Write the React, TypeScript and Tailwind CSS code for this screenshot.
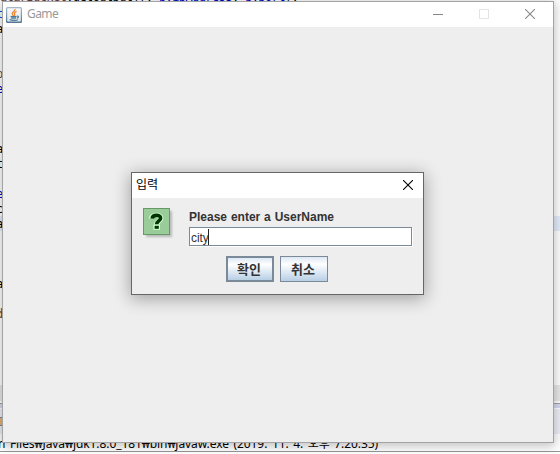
const codeRows: { text: string; color: string }[] = [
  { text: 't', color: 'text-blue-700' },
  { text: 'a', color: 'text-black' },
  { text: '', color: '' },
  { text: '', color: '' },
  { text: 'p', color: 'text-[#6a3e3e]' },
  { text: 'e', color: 'text-[#0000c0]' },
  { text: '', color: '' },
  { text: '', color: '' },
  { text: '', color: '' },
  { text: 'a', color: 'text-black' },
  { text: 't', color: 'text-black' },
  { text: '', color: '' },
  { text: 'e', color: 'text-[#0000c0]' },
  { text: 'c', color: 'text-black' },
  { text: 'a', color: 'text-black' },
  { text: '', color: '' },
  { text: '', color: '' },
  { text: '', color: '' },
  { text: 'a', color: 'text-black' },
  { text: '', color: '' },
  { text: 'd', color: 'text-[#6a3e3e]' },
];

function CloseGlyph({ color }: { color: string }) {
  return (
    <svg width="10" height="10" viewBox="0 0 10 10" className="block" fill="none" stroke={color} strokeWidth="1.1">
      <path d="M0 0L10 10M10 0L0 10" />
    </svg>
  );
}

function JavaIcon() {
  return (
    <svg width="16" height="16" viewBox="0 0 16 16" className="block shrink-0">
      <defs>
        <linearGradient id="javaTile" x1="0" y1="0" x2="0" y2="1">
          <stop offset="0" stopColor="#a9bccb" />
          <stop offset="1" stopColor="#54758f" />
        </linearGradient>
        <linearGradient id="javaFace" x1="0" y1="0" x2="0" y2="1">
          <stop offset="0" stopColor="#f7f9fb" />
          <stop offset="1" stopColor="#dfe7ed" />
        </linearGradient>
      </defs>
      <rect width="16" height="16" rx="1.5" fill="url(#javaTile)" />
      <rect x="1.2" y="1.2" width="13.6" height="13.4" rx="0.8" fill="url(#javaFace)" />
      <path d="M9 2C9.6 4 6 4.8 6.2 6.6C6.3 7.6 7.2 8.2 7.4 9M10.6 4.4C8.6 5.2 8 6 8.6 7C9 7.7 8.8 8.3 8.2 9" fill="none" stroke="#ee8434" strokeWidth="1.3" />
      <path d="M4.6 9.6H10.4M5.2 11.1H10M10.8 9.2C13.2 8.8 12.8 10.8 10.8 11.2M3.6 12.6C5.5 13.7 10.5 13.6 12.2 12.6" fill="none" stroke="#4d7896" strokeWidth="1.1" />
    </svg>
  );
}

function QuestionIcon() {
  return (
    <svg width="31" height="31" viewBox="0 0 31 31" className="block shrink-0 overflow-visible">
      <defs>
        <filter id="tileShadow" x="-30%" y="-30%" width="170%" height="170%">
          <feGaussianBlur stdDeviation="1.3" />
        </filter>
      </defs>
      <rect x="3" y="3" width="26" height="26" fill="#000" opacity="0.22" filter="url(#tileShadow)" />
      <rect x="0.5" y="0.5" width="26" height="26" fill="#99cc99" stroke="#669966" />
      <g fill="none" stroke="#ccffcc">
        <path d="M8.3 10.6C8.6 6.2 18 6.2 17.8 10.4C17.8 13 13.6 13.2 13.6 16.8" strokeWidth="5.2" />
        <path d="M10.4 19.2H17" strokeWidth="5.2" />
      </g>
      <path d="M9.2 10.6C9.4 6.4 17.7 6.4 17.6 10.2C17.6 12.8 13.7 13 13.7 16.2" fill="none" stroke="#003300" strokeWidth="3.6" />
      <rect x="11.6" y="17.8" width="4.2" height="3" fill="#003300" />
    </svg>
  );
}

function Backdrop() {
  return (
    <div className="flex h-full flex-col bg-white">
      <div className="relative h-[403px] shrink-0 overflow-hidden">
        <div className="absolute -top-[10px] left-0 h-[15px] whitespace-pre font-['DejaVu_Sans_Mono',monospace] text-[12px] leading-[15px] tracking-[-0.6px] text-black">
          <span className="text-[#6a3e3e]">atarBucket</span>.getOutput(), <span className="text-[#0000c0]">p.ipAddress</span>, <span className="text-[#0000c0]">p.port</span>);
        </div>
        <div className="absolute top-[216px] h-[15px] w-full bg-[#e3edfa]" />
        <div className="relative flex flex-col pt-[7px]">
          {codeRows.map((row, i) => (
            <div key={i} className={`-ml-[4px] h-[15px] font-['DejaVu_Sans_Mono',monospace] text-[12px] leading-[15px] ${row.color}`}>
              {row.text}
            </div>
          ))}
        </div>
        <div className="absolute bottom-[2px] h-[16px] w-full bg-[#e8e8e8]" />
      </div>
      <div className="h-px shrink-0 bg-[#a0a0a0]" />
      <div className="h-[4px] shrink-0 bg-[#d5daf0]" />
      <div className="h-px shrink-0 bg-white" />
      <div className="flex h-[25px] shrink-0 items-center bg-[#eeeef8]">
        <div className="-ml-[6px] mt-[-1px] h-[9px] w-[9px] border border-[#7484a8] bg-[#e5b26f]" />
      </div>
      <div className="h-[17px] shrink-0 whitespace-pre pt-px font-['Noto_Sans','Noto_Sans_CJK_KR',sans-serif] text-[12px] leading-[17px] text-black">
        <span className="-ml-[2px] inline-block w-[380px] tracking-[-0.08px] [text-align-last:justify]">n Files₩Java₩jdk1.8.0_181₩bin₩javaw.exe (2019. 11. 4. 오후 7:20:35)</span>
      </div>
      <div className="h-px shrink-0 bg-[#969696]" />
    </div>
  );
}

function DialogButton({ label, focused = false }: { label: string; focused?: boolean }) {
  return (
    <button
      className={`flex h-[26px] w-[48px] items-center justify-center border-[#7a8a99] bg-gradient-to-b from-[#dde8f3] via-white via-30% to-[#b8cfe5] py-0 pl-0 pr-[2px] text-[13px] font-bold leading-none text-[#333] ${focused ? 'border-2' : 'border'}`}
    >
      {label}
    </button>
  );
}

function InputDialog() {
  return (
    <div className="absolute left-[131px] top-[172px] flex h-[123px] w-[293px] flex-col border border-[#666] bg-[#eee] font-['Liberation_Sans','Noto_Sans_CJK_KR',sans-serif] shadow-[0_3px_16px_1px_rgba(0,0,0,0.32)]">
      <div className="flex h-[25px] shrink-0 items-center justify-between bg-white pl-[4px] pr-[10px]">
        <span className="-mt-[2px] text-[12px] leading-none text-black">입력</span>
        <div className="-mt-px">
          <CloseGlyph color="#000" />
        </div>
      </div>
      <div className="flex h-[48px] shrink-0 pl-[11px] pt-[10px]">
        <QuestionIcon />
        <div className="ml-[15px] flex flex-col">
          <label htmlFor="username" className="h-[19px] whitespace-nowrap pt-[1px] text-[12px] font-bold leading-[16px] text-[#333]">
            <span className="inline-block w-[145px] [text-align-last:justify]">Please enter a UserName</span>
          </label>
          <div className="flex h-[19px] w-[223px] items-center border border-[#7a8a99] bg-white pl-px shadow-[1px_1px_0_#fff]">
            <span id="username" className="pt-[2px] text-[12px] leading-none tracking-[-0.1px] text-[#333]">city</span>
            <span className="-ml-px h-[16px] w-px bg-[#222]" />
          </div>
        </div>
      </div>
      <div className="flex gap-[6px] pl-[94px] pt-[10px]">
        <DialogButton label="확인" focused />
        <DialogButton label="취소" />
      </div>
    </div>
  );
}

function GameWindow() {
  return (
    <div className="absolute left-[2px] top-px flex h-[442px] w-[552px] flex-col border border-[#a3a3a3] bg-[#eee] shadow-[0_2px_10px_1px_rgba(0,0,0,0.25)]">
      <div className="flex h-[25px] shrink-0 items-center bg-white pl-[3px] pr-[18px]">
        <JavaIcon />
        <span className="-mt-px ml-[5px] font-['Noto_Sans',sans-serif] text-[12px] leading-none tracking-[-0.6px] text-[#999]">Game</span>
        <div className="-mt-px ml-auto flex items-center gap-[35px]">
          <div className="mr-px h-px w-[10px] bg-[#888]" />
          <div className="mr-px h-[10px] w-[10px] border border-[#e4e4e4]" />
          <CloseGlyph color="#888" />
        </div>
      </div>
    </div>
  );
}

export default function App() {
  return (
    <div className="relative h-[454px] w-[560px] overflow-hidden">
      <Backdrop />
      <GameWindow />
      <InputDialog />
    </div>
  );
}
